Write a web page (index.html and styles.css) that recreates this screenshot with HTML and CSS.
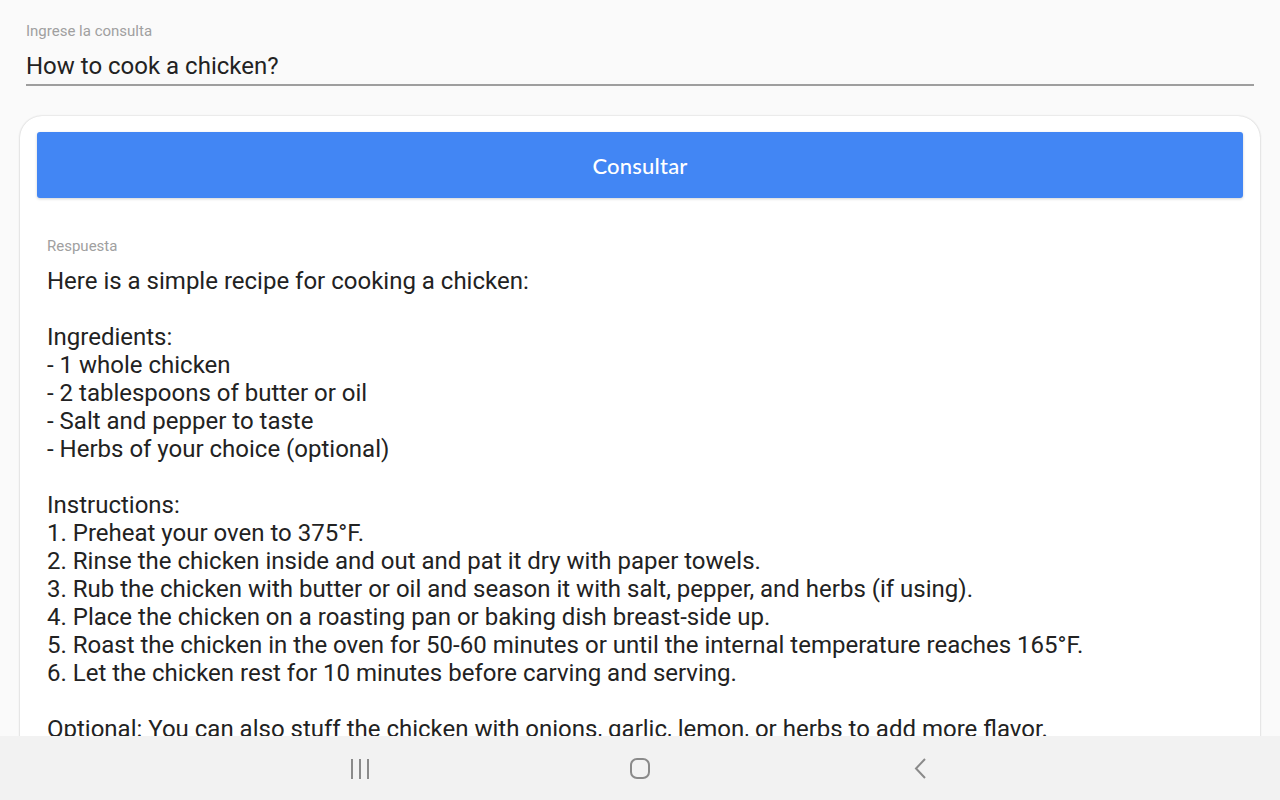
FILE: index.html
```html
<!DOCTYPE html>
<html lang="es">
<head>
<meta charset="utf-8">
<title>Consulta</title>
<link rel="stylesheet" href="styles.css">
</head>
<body>
<div class="screen">
  <main class="content">
    <div class="field">
      <div class="field-label">Ingrese la consulta</div>
      <div class="field-value">How to cook a chicken?</div>
    </div>
    <section class="card">
      <button class="btn">Consultar</button>
      <div class="answer">
        <div class="answer-label">Respuesta</div>
        <div class="answer-text">Here is a simple recipe for cooking a chicken:

Ingredients:
- 1 whole chicken
- 2 tablespoons of butter or oil
- Salt and pepper to taste
- Herbs of your choice (optional)

Instructions:
1. Preheat your oven to 375°F.
2. Rinse the chicken inside and out and pat it dry with paper towels.
3. Rub the chicken with butter or oil and season it with salt, pepper, and herbs (if using).
4. Place the chicken on a roasting pan or baking dish breast-side up.
5. Roast the chicken in the oven for 50-60 minutes or until the internal temperature reaches 165°F.
6. Let the chicken rest for 10 minutes before carving and serving.

Optional: You can also stuff the chicken with onions, garlic, lemon, or herbs to add more flavor.</div>
      </div>
    </section>
  </main>
  <nav class="navbar">
    <svg class="nav-icon" width="24" height="24" viewBox="0 0 24 24"><g fill="#8a8a8a"><rect x="3" y="2" width="2" height="20"/><rect x="11" y="2" width="2" height="20"/><rect x="19" y="2" width="2" height="20"/></g></svg>
    <svg class="nav-icon" width="24" height="24" viewBox="0 0 24 24"><rect x="3" y="2" width="18" height="19" rx="6" fill="none" stroke="#8a8a8a" stroke-width="2"/></svg>
    <svg class="nav-icon" width="24" height="24" viewBox="0 0 24 24"><path d="M17 2 L8 11.5 L17 21" fill="none" stroke="#8a8a8a" stroke-width="2"/></svg>
  </nav>
</div>
</body>
</html>
```
FILE: styles.css
```css
html, body {
  margin: 0;
  padding: 0;
}
body {
  background: #fafafa;
  font-family: Roboto, "Noto Sans", sans-serif;
  color: #212121;
}
.screen {
  width: 1280px;
  height: 800px;
  display: flex;
  flex-direction: column;
  overflow: hidden;
}
.content {
  height: 736px;
  overflow: hidden;
  padding: 0 20px;
  box-sizing: border-box;
}
.field {
  margin: 0 6px;
  padding-top: 23px;
  border-bottom: 2px solid #9e9e9e;
}
.field-label {
  font-size: 15px;
  line-height: 17px;
  color: #a0a0a0;
}
.field-value {
  font-size: 24px;
  line-height: 28px;
  padding: 12px 0 4px;
  color: #222;
}
.card {
  margin-top: 30px;
  background: #fff;
  border-radius: 22px;
  box-shadow: 0 0 2px rgba(0,0,0,0.2), 0 1px 3px rgba(0,0,0,0.08);
  padding: 16px 17px 40px;
}
.btn {
  display: block;
  width: 100%;
  height: 66px;
  border: none;
  border-radius: 3px;
  background: #4286f4;
  color: #fff;
  font-family: Lato, "Open Sans", sans-serif;
  font-size: 22px;
  font-weight: 500;
  letter-spacing: 0.2px;
  box-shadow: 0 1px 3px rgba(0,0,0,0.18);
  cursor: pointer;
}
.answer {
  padding: 40px 10px 0;
}
.answer-label {
  font-size: 15px;
  line-height: 17px;
  color: #a0a0a0;
}
.answer-text {
  margin-top: 12px;
  font-size: 24px;
  line-height: 28px;
  white-space: pre-wrap;
  color: #222;
}
.navbar {
  height: 64px;
  background: #f2f2f2;
  display: flex;
  justify-content: center;
  align-items: center;
  gap: 256px;
  padding-top: 2px;
  box-sizing: border-box;
}
.nav-icon {
  display: block;
}
```
